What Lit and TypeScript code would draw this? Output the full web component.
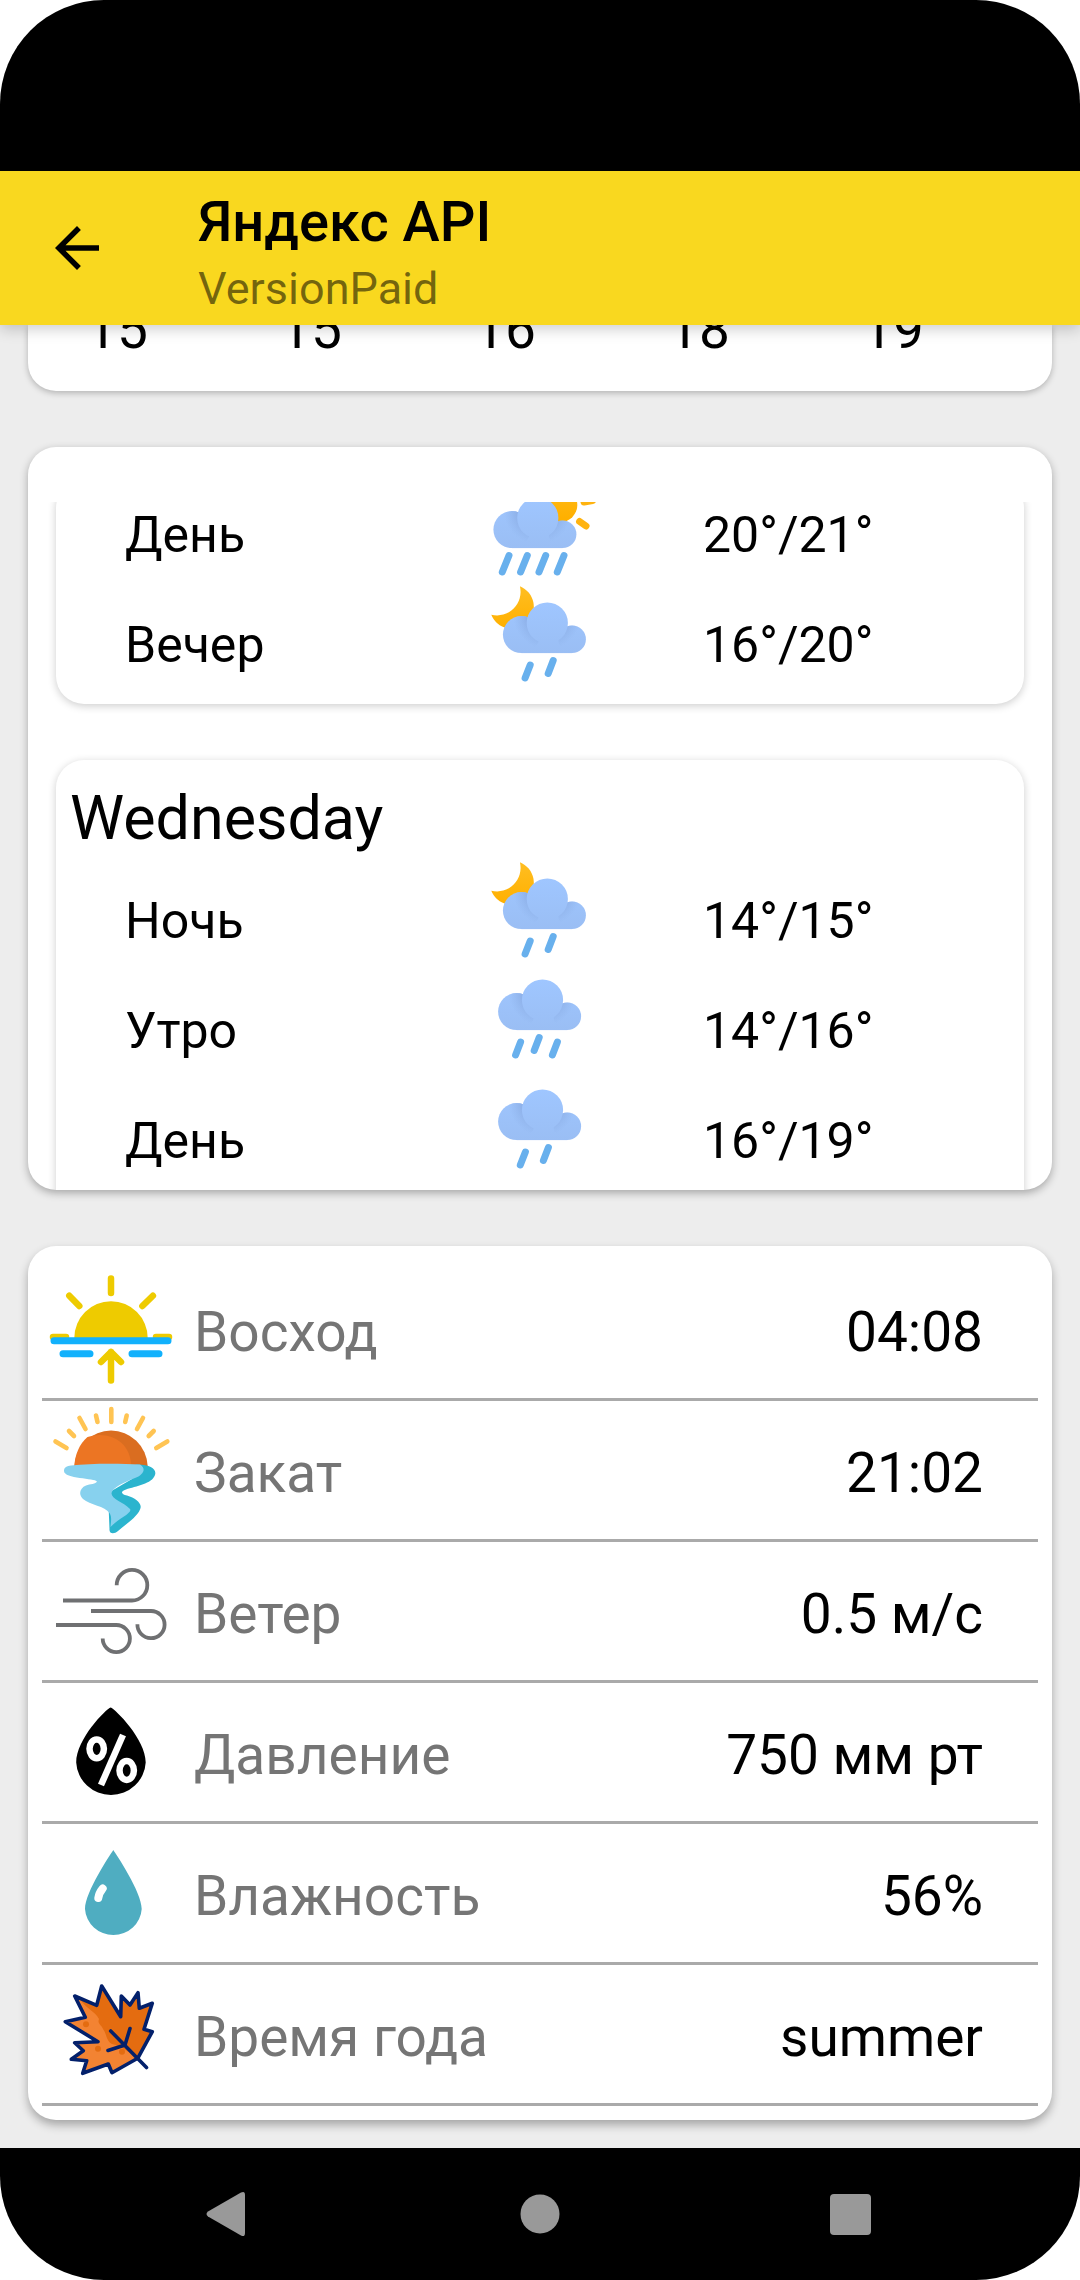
import { LitElement, html, css, svg } from "lit";
import { customElement, property } from "lit/decorators.js";

interface Part {
  label: string;
  icon: string;
  temp: string;
}

interface Detail {
  label: string;
  icon: string;
  value: string;
}

const HOURS = ["15", "15", "16", "18", "19"];

const PREVIOUS_DAY: Part[] = [
  { label: "День", icon: "sun-rain", temp: "20°/21°" },
  { label: "Вечер", icon: "moon-drizzle", temp: "16°/20°" },
];

const WEDNESDAY: Part[] = [
  { label: "Ночь", icon: "moon-drizzle", temp: "14°/15°" },
  { label: "Утро", icon: "rain", temp: "14°/16°" },
  { label: "День", icon: "drizzle", temp: "16°/19°" },
];

const DETAILS: Detail[] = [
  { label: "Восход", icon: "sunrise", value: "04:08" },
  { label: "Закат", icon: "sunset", value: "21:02" },
  { label: "Ветер", icon: "wind", value: "0.5 м/с" },
  { label: "Давление", icon: "pressure", value: "750 мм рт" },
  { label: "Влажность", icon: "humidity", value: "56%" },
  { label: "Время года", icon: "season", value: "summer" },
];

@customElement("weather-icon")
export class WeatherIcon extends LitElement {
  static styles = css`
    :host {
      display: block;
    }
    .icon {
      display: block;
      width: 110px;
      height: 110px;
      overflow: visible;
    }
    .drops {
      fill: none;
      stroke: #68b0ed;
      stroke-width: 7;
      stroke-linecap: round;
    }
    .rays {
      fill: none;
      stroke: #ffb30f;
      stroke-width: 7;
      stroke-linecap: round;
    }
  `;

  @property() name = "rain";

  private cloud() {
    return svg`
      <circle cx="31.6" cy="35.6" r="18.5" fill="url(#sky)"/>
      <circle cx="82.3" cy="40.3" r="13.8" fill="url(#sky)"/>
      <rect x="31.6" y="34" width="50.7" height="20.1" fill="url(#sky)"/>
      <g clip-path="url(#sides)">
        <circle cx="57.5" cy="16" r="36" fill="url(#shade)"/>
      </g>
      <circle cx="57.5" cy="24" r="20.6" fill="url(#sky)"/>
    `;
  }

  private moon() {
    return svg`<path fill="url(#moon)" d="M34.9 -3.7A22 22 0 1 1 6.3 24.7A23.5 23.5 0 0 0 34.9 -3.7Z"/>`;
  }

  private art() {
    switch (this.name) {
      case "sun-rain":
        return svg`
          <circle cx="75" cy="25" r="17.3" fill="url(#moon)"/>
          <path class="rays" d="M99 22L107.5 20.5M94.6 41.5L101 46"/>
          <g transform="translate(-4.700 14)">${this.cloud()}</g>
          <path class="drops" d="M24 75.5L17.3 92M42.300 75.500L35.600 92M60.700 75.500L54 92M79 75.500L72.300 92"/>
        `;
      case "moon-drizzle":
        return svg`
          ${this.moon()}
          <g transform="translate(4.800 9)">
            ${this.cloud()}
            <path class="drops" d="M40.400 66L35.300 79M63.400 61.500L58.400 74.500"/>
          </g>
        `;
      case "drizzle":
        return svg`
          ${this.cloud()}
          <path class="drops" d="M40.400 66L35.300 79M63.400 61.500L58.400 74.500"/>
        `;
      default:
        return svg`
          ${this.cloud()}
          <path class="drops" d="M35.600 66L30.600 79M54.200 61.500L49.200 74.500M72.400 66L67.400 79"/>
        `;
    }
  }

  render() {
    return html`
      <svg class="icon" viewBox="0 0 110 110" aria-hidden="true">
        <defs>
          <linearGradient id="sky" gradientUnits="userSpaceOnUse" x1="0" y1="4" x2="0" y2="54">
            <stop offset="0" stop-color="#9fc6ff" />
            <stop offset="1" stop-color="#9abef4" />
          </linearGradient>
          <radialGradient id="shade" gradientUnits="userSpaceOnUse" cx="57.5" cy="16" r="36">
            <stop offset="0.55" stop-color="#8aace4" stop-opacity="0.85" />
            <stop offset="0.95" stop-color="#8fb3ea" stop-opacity="0" />
          </radialGradient>
          <linearGradient id="moon" gradientUnits="userSpaceOnUse" x1="0" y1="-4" x2="0" y2="38">
            <stop offset="0" stop-color="#ffbe22" />
            <stop offset="1" stop-color="#ffb000" />
          </linearGradient>
          <clipPath id="sides">
            <circle cx="31.6" cy="35.6" r="18.5" />
            <circle cx="82.3" cy="40.3" r="13.8" />
          </clipPath>
        </defs>
        ${this.art()}
      </svg>
    `;
  }
}

@customElement("detail-icon")
export class DetailIcon extends LitElement {
  static styles = css`
    :host {
      display: block;
    }
    .icon {
      display: block;
      width: 138px;
      height: 138px;
    }
    .line {
      fill: none;
      stroke-linecap: round;
      stroke-linejoin: round;
    }
    .sun {
      stroke: #eecb00;
      stroke-width: 6.5;
    }
    .sea {
      stroke: #12b1fc;
      stroke-width: 7;
    }
    .glow {
      fill: none;
      stroke: #ffc453;
      stroke-width: 4.6;
      stroke-linecap: round;
    }
    .wind {
      fill: none;
      stroke: #6f7072;
      stroke-width: 3.8;
    }
    .percent {
      fill: none;
      stroke: #fff;
      stroke-width: 6.5;
    }
    .vein {
      stroke: #03206b;
      stroke-width: 3.6;
    }
  `;

  @property() name = "sunrise";

  private art() {
    switch (this.name) {
      case "sunrise":
        return svg`
          <path fill="#eecb00" d="M32.3 78A36.7 36.7 0 0 1 105.7 78Z"/>
          <path class="line sun" d="M69 18.5V33M27.3 35.7L37.3 46M110.9 35.7L100.4 46M11 77H24M114 77H127"/>
          <path class="line sea" d="M12 80.8H126M21 93.7H48M90 93.7H117"/>
          <path class="line sun" d="M69 92V120.5M59 102L69 92L79 102"/>
        `;
      case "sunset":
        return svg`
          <path fill="#da6d20" d="M32.4 65A36.7 37.5 0 0 1 105.7 65Z"/>
          <path fill="#ec7523" d="M32.4 65C33 53 37.500 43 45.500 36C66 29 89 40 89 65Z"/>
          <path class="glow" d="M69.3 8V21M54 14.500L55.500 21M84.700 14.500L83.200 21M37.500 17L43.500 28M101 17L95 28M27 30L32 35M111.700 30L106.700 35M13.500 40.500L24.500 47M125.300 40.500L114.300 47"/>
          <path fill="#2bb4ce" d="M94 63.500C108 63 115 68 113 74C110 83 94 85 84 88.500C78 90.500 79 93 85 94.500C94 97 101 103 98 108.500C95 116 84 123 76 130C72 133.500 67 133 67.500 128L66 92L90 78Z"/>
          <path fill="#87d1ee" d="M29 64.500C50 62 80 62.500 98 63.500C105 68 101 74 93 77C83 81 71 86 69.500 92C69 98 81 101 88 108C91 112 76 118 68.500 126C69 120 70 116 67.500 112C63 105 48 104 41 98C36 93 38 87 44 84.500C48 83 54 83 55 80.500C53 77 22 78 22 70C22 66 25 65 29 64.500Z"/>
        `;
      case "wind":
        return svg`
          <path class="wind" d="M21 58.500H90A15.300 15.300 0 1 0 74.700 43.200M49 69H109A13.600 13.600 0 1 1 95.400 82.300M14 83H74.300A13.600 13.600 0 1 1 60.700 96.600"/>
        `;
      case "pressure":
        return svg`
          <path d="M68.700 24.500C73 26 103.700 56 103.700 79.500A34.800 34.300 0 0 1 34.200 79.500C34.200 56 64 26 68.700 24.500Z"/>
          <ellipse class="percent" cx="54.700" cy="65.800" rx="7.200" ry="9.400"/>
          <ellipse class="percent" cx="84.700" cy="87.500" rx="7.200" ry="9.400"/>
          <line class="percent" x1="81" y1="52" x2="59" y2="102"/>
        `;
      case "humidity":
        return svg`
          <path fill="#4fadc1" d="M71.300 26C74 30 99.700 68 99.700 85A28.400 27.700 0 0 1 43 85C43 68 68.600 30 71.300 26Z"/>
          <path class="line" stroke="#fff" stroke-width="8" d="M60.700 64.500Q57 69 56.300 74"/>
        `;
      default:
        return svg`
          <clipPath id="leaf">
            <path d="M59.700 21L78.700 51.700L79.300 31L88 40L96 27.700L97.300 43.300L110.300 38.300L102 64.300L110.300 66.700L95.700 93.300L70 107.700L66.300 99L40.700 108.300L44.700 95.700L29.300 94.300L41.300 85.700L32.700 77.700L56 76.700L23.300 56.700L43.300 52.300L32.700 31L54.700 40.300Z"/>
          </clipPath>
          <g clip-path="url(#leaf)">
            <rect width="138" height="138" fill="#e46c10"/>
            <path fill="#f38332" d="M20 25L38 34C42 42 54 47 57 54C55 59 60 60 61 64C65 69 64 76 70 79C78 80 88 88 97 94L90 120H15Z"/>
            <circle cx="44" cy="59.300" r="3" fill="#e46c10"/>
            <circle cx="56" cy="83.700" r="3" fill="#e46c10"/>
            <circle cx="80" cy="86.700" r="3" fill="#e46c10"/>
          </g>
          <path class="line vein" d="M59.700 21L78.700 51.700L79.300 31L88 40L96 27.700L97.300 43.300L110.300 38.300L102 64.300L110.300 66.700L95.700 93.300L70 107.700L66.300 99L40.700 108.300L44.700 95.700L29.300 94.300L41.300 85.700L32.700 77.700L56 76.700L23.300 56.700L43.300 52.300L32.700 31L54.700 40.300Z"/>
          <path class="line vein" d="M104.500 102.500L68.700 66M88 63.500L83 80L66 85.500"/>
        `;
    }
  }

  render() {
    return html`<svg class="icon" viewBox="0 0 138 138" aria-hidden="true">${this.art()}</svg>`;
  }
}

@customElement("app-root")
export class AppRoot extends LitElement {
  static styles = css`
    :host {
      display: block;
      background: #fff;
      color: #000;
      font-family: Roboto, "Noto Sans", sans-serif;
    }
    .phone {
      display: flex;
      flex-direction: column;
      min-height: 100vh;
      overflow: hidden;
      border-radius: 104px;
      background: #ededed;
    }
    .status {
      height: 171px;
      background: #000;
    }
    .bar {
      position: relative;
      z-index: 1;
      display: flex;
      align-items: center;
      gap: 88px;
      padding: 18px 44px 10px;
      background: #f9d81f;
      box-shadow: 0 4px 14px rgba(0, 0, 0, 0.2);
    }
    .back,
    .key {
      display: block;
      margin: 0;
      padding: 0;
      border: 0;
      background: none;
      color: inherit;
    }
    .back {
      margin-bottom: 8px;
    }
    .back-icon {
      display: block;
      width: 66px;
      height: 66px;
    }
    .title {
      margin: 0;
      font-size: 56px;
      line-height: 66px;
      font-weight: 500;
    }
    .subtitle {
      margin: 0;
      padding-top: 8px;
      font-size: 45px;
      line-height: 52px;
      color: rgba(0, 0, 0, 0.54);
    }
    .content {
      flex: 1;
      display: flex;
      flex-direction: column;
      gap: 56px;
      padding: 0 28px 28px;
    }
    .card {
      background: #fff;
      border-radius: 28px;
      box-shadow: 0 2px 6px rgba(0, 0, 0, 0.25);
    }
    .hours {
      display: flex;
      align-items: flex-end;
      height: 36px;
      margin: 0;
      padding: 0 54px 30px 0;
      overflow: hidden;
      list-style: none;
      border-radius: 0 0 28px 28px;
    }
    .hour {
      flex: 1;
      padding-left: 58px;
      font-size: 55px;
      line-height: 64px;
    }
    .forecast {
      padding-top: 55px;
      box-shadow: 0 3px 8px rgba(0, 0, 0, 0.3);
    }
    .viewport {
      height: 688px;
      overflow: hidden;
      border-radius: 0 0 28px 28px;
    }
    .days {
      display: flex;
      flex-direction: column;
      gap: 56px;
      margin-top: -22px;
      padding: 0 28px;
    }
    .day {
      padding-bottom: 4px;
      box-shadow: 0 2px 8px rgba(0, 0, 0, 0.2);
    }
    .day:last-child {
      padding-bottom: 56px;
    }
    .day-name {
      margin: 0;
      padding: 22px 14px 12px;
      font-size: 61px;
      line-height: 72px;
      font-weight: 400;
    }
    .parts {
      margin: 0;
      padding: 0;
      list-style: none;
    }
    .part {
      display: grid;
      grid-template-columns: 1fr 110px 1fr;
      align-items: center;
      font-size: 50px;
      line-height: 60px;
    }
    .part-name {
      padding-left: 69px;
    }
    .part-temp {
      padding-left: 108px;
    }
    .details {
      margin: 0;
      padding: 14px;
      box-shadow: 0 5px 10px rgba(0, 0, 0, 0.3);
    }
    .detail {
      display: flex;
      align-items: center;
      gap: 14px;
      padding-right: 55px;
      border-bottom: 3px solid #aaa;
      font-size: 55px;
      line-height: 64px;
    }
    .detail-name,
    .detail-value {
      margin: 0;
      padding-top: 6px;
    }
    .detail-name {
      flex: 1;
      color: #757575;
    }
    .nav {
      display: grid;
      grid-template-columns: repeat(3, 1fr);
      justify-items: center;
      align-items: center;
      height: 132px;
      padding: 0 72px;
      background: #000;
      color: #999;
    }
    .key-icon {
      display: block;
      width: 66px;
      height: 66px;
      fill: currentColor;
    }
  `;

  private renderParts(parts: Part[]) {
    return html`
      <ul class="parts">
        ${parts.map(
          (part) => html`
            <li class="part">
              <span class="part-name">${part.label}</span>
              <weather-icon name=${part.icon}></weather-icon>
              <span class="part-temp">${part.temp}</span>
            </li>
          `
        )}
      </ul>
    `;
  }

  render() {
    return html`
      <div class="phone">
        <div class="status"></div>
        <header class="bar">
          <button class="back" type="button" aria-label="Назад">
            <svg class="back-icon" viewBox="0 0 24 24" aria-hidden="true">
              <path d="M20 11H7.83l5.59-5.59L12 4l-8 8 8 8 1.41-1.41L7.83 13H20v-2z" />
            </svg>
          </button>
          <div>
            <h1 class="title">Яндекс API</h1>
            <p class="subtitle">VersionPaid</p>
          </div>
        </header>
        <main class="content">
          <ul class="card hours">
            ${HOURS.map((hour) => html`<li class="hour">${hour}</li>`)}
          </ul>
          <section class="card forecast">
            <div class="viewport">
              <div class="days">
                <article class="card day">${this.renderParts(PREVIOUS_DAY)}</article>
                <article class="card day">
                  <h2 class="day-name">Wednesday</h2>
                  ${this.renderParts(WEDNESDAY)}
                </article>
              </div>
            </div>
          </section>
          <dl class="card details">
            ${DETAILS.map(
              (detail) => html`
                <div class="detail">
                  <detail-icon name=${detail.icon}></detail-icon>
                  <dt class="detail-name">${detail.label}</dt>
                  <dd class="detail-value">${detail.value}</dd>
                </div>
              `
            )}
          </dl>
        </main>
        <nav class="nav">
          <button class="key" type="button" aria-label="Назад">
            <svg class="key-icon" viewBox="0 0 66 66" aria-hidden="true">
              <path d="M13 30.500L46 11.500Q50 9.500 50 14V52Q50 56.500 46 54.500L13 35.500Q10 33 13 30.500Z" />
            </svg>
          </button>
          <button class="key" type="button" aria-label="Главный экран">
            <svg class="key-icon" viewBox="0 0 66 66" aria-hidden="true">
              <circle cx="33" cy="33" r="19.500" />
            </svg>
          </button>
          <button class="key" type="button" aria-label="Недавние приложения">
            <svg class="key-icon" viewBox="0 0 66 66" aria-hidden="true">
              <rect x="11" y="13" width="41" height="41" rx="4" />
            </svg>
          </button>
        </nav>
      </div>
    `;
  }
}
